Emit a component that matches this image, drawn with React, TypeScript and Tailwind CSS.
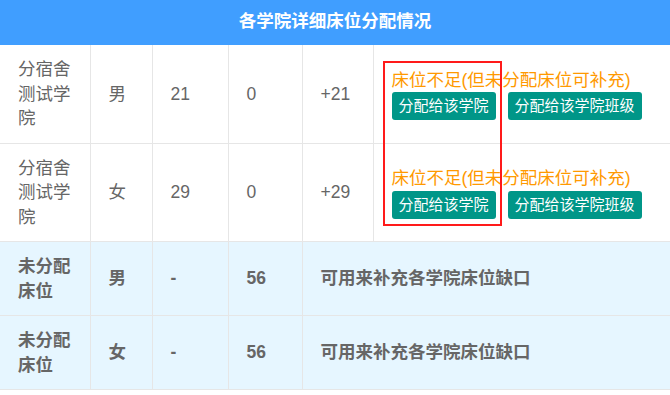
const rows = [
  { college: "分宿舍测试学院", sex: "男", total: "21", used: "0", diff: "+21" },
  { college: "分宿舍测试学院", sex: "女", total: "29", used: "0", diff: "+29" },
];

const spare = [
  { sex: "男", num: "56" },
  { sex: "女", num: "56" },
];

const cell = "border-l border-b border-[#e6e6e6] px-[18px] py-3 align-middle text-left";
const first = "border-b border-[#e6e6e6] px-[18px] py-3 align-middle text-left";

const App = () => {
  return (
    <div
      className="relative w-[670px] bg-white text-[17.5px] leading-[24.5px] text-[#666666]"
      style={{ fontFamily: '"Liberation Sans", "Noto Sans CJK SC", sans-serif' }}
    >
      <table className="w-full table-fixed border-collapse">
        <colgroup>
          <col className="w-[90px]" />
          <col className="w-[62px]" />
          <col className="w-[76px]" />
          <col className="w-[74px]" />
          <col className="w-[71px]" />
          <col />
        </colgroup>
        <thead>
          <tr>
            <th
              colSpan={6}
              className="h-[45px] bg-[#409eff] pb-[3px] text-center text-[17.5px] font-bold text-white"
            >
              各学院详细床位分配情况
            </th>
          </tr>
        </thead>
        <tbody>
          {rows.map((r, i) => (
            <tr key={i} className="h-[98px]">
              <td className={first}>{r.college}</td>
              <td className={cell}>{r.sex}</td>
              <td className={cell}>{r.total}</td>
              <td className={cell}>{r.used}</td>
              <td className={cell}>{r.diff}</td>
              <td className={cell}>
                <div className="text-[#ff9900]">床位不足(但未分配床位可补充)</div>
                <div className="flex gap-3">
                  <button className="h-7 rounded-[3px] bg-[#009688] px-[7px] text-[15px] leading-7 text-white">
                    分配给该学院
                  </button>
                  <button className="h-7 rounded-[3px] bg-[#009688] px-[7px] text-[15px] leading-7 text-white">
                    分配给该学院班级
                  </button>
                </div>
              </td>
            </tr>
          ))}
          {spare.map((s, i) => (
            <tr key={i} className="h-[73px] bg-[#e6f6ff] font-bold">
              <td className={first}>未分配床位</td>
              <td className={cell}>{s.sex}</td>
              <td className={cell}>-</td>
              <td className={cell}>{s.num}</td>
              <td colSpan={2} className={cell}>
                可用来补充各学院床位缺口
              </td>
            </tr>
          ))}
        </tbody>
      </table>
      {/* red highlight box */}
      <div className="pointer-events-none absolute left-[383px] top-[61px] h-[165px] w-[119px] border-2 border-[#ff1a1a]" />
    </div>
  );
};

export default App;
